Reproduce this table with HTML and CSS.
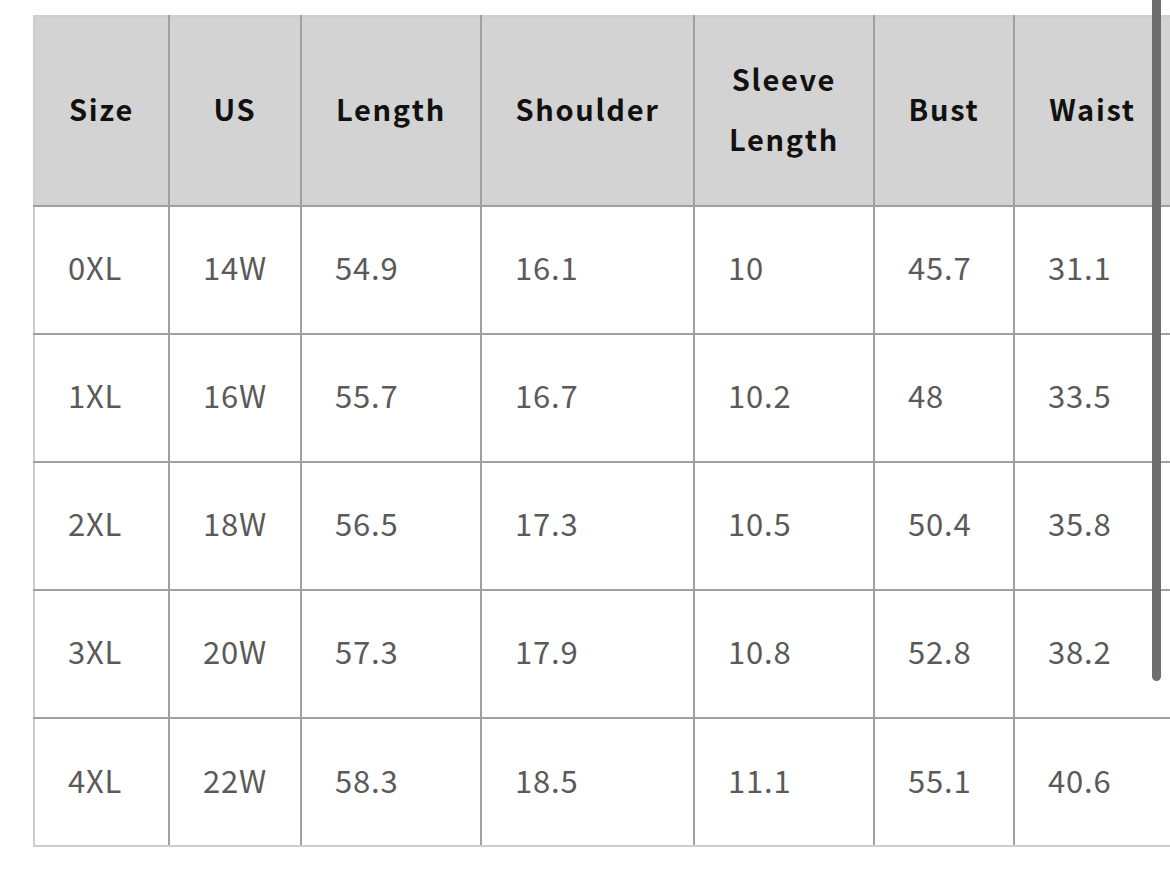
FILE: index.html
```html
<!DOCTYPE html>
<html>
<head>
<meta charset="utf-8">
<link rel="stylesheet" href="styles.css">
</head>
<body>
<div class="wrap">
  <table class="size-table">
    <colgroup>
      <col class="c1"><col class="c2"><col class="c3"><col class="c4"><col class="c5"><col class="c6"><col class="c7">
    </colgroup>
    <thead>
      <tr>
        <th>Size</th><th>US</th><th>Length</th><th>Shoulder</th><th>Sleeve<br>Length</th><th>Bust</th><th>Waist</th>
      </tr>
    </thead>
    <tbody>
      <tr><td>0XL</td><td>14W</td><td>54.9</td><td>16.1</td><td>10</td><td>45.7</td><td>31.1</td></tr>
      <tr><td>1XL</td><td>16W</td><td>55.7</td><td>16.7</td><td>10.2</td><td>48</td><td>33.5</td></tr>
      <tr><td>2XL</td><td>18W</td><td>56.5</td><td>17.3</td><td>10.5</td><td>50.4</td><td>35.8</td></tr>
      <tr><td>3XL</td><td>20W</td><td>57.3</td><td>17.9</td><td>10.8</td><td>52.8</td><td>38.2</td></tr>
      <tr><td>4XL</td><td>22W</td><td>58.3</td><td>18.5</td><td>11.1</td><td>55.1</td><td>40.6</td></tr>
    </tbody>
  </table>
</div>
<div class="scrollbar"></div>
</body>
</html>
```
FILE: styles.css
```css
html, body {
  margin: 0;
  padding: 0;
  background: #ffffff;
}
body {
  width: 1170px;
  height: 877px;
  overflow: hidden;
  position: relative;
  font-family: "Noto Sans CJK SC", "Noto Sans", sans-serif;
}
.wrap {
  padding: 15px 0 0 33px;
}
.size-table {
  border-collapse: collapse;
  table-layout: fixed;
  width: 1137px;
  border: 2px solid #cdcdcd;
}
.c1 { width: 135px; }
.c2 { width: 132px; }
.c3 { width: 180px; }
.c4 { width: 213px; }
.c5 { width: 180px; }
.c6 { width: 140px; }
.c7 { width: 157px; }
.size-table th,
.size-table td {
  border: 2px solid #a0a0a0;
  vertical-align: middle;
  white-space: nowrap;
}
.size-table thead tr {
  height: 190px;
}
.size-table th {
  background: #d3d3d3;
  color: #111111;
  font-weight: 700;
  font-size: 29px;
  letter-spacing: 1.7px;
  line-height: 60px;
  text-align: center;
  padding: 0 0 6px 0;
}
.size-table tbody tr {
  height: 128px;
}
.size-table td {
  color: #5a5a5a;
  font-weight: 400;
  font-size: 31px;
  letter-spacing: 0.8px;
  text-align: left;
  padding: 0 0 7px 33px;
}
.size-table tbody tr:last-child td {
  padding-bottom: 5px;
}
.size-table tr > :first-child { border-left-color: #cdcdcd; }
.size-table tr > :last-child { border-right-color: #cdcdcd; }
.size-table thead th { border-top-color: #cdcdcd; }
.size-table tbody tr:last-child td { border-bottom-color: #cdcdcd; }
.scrollbar {
  position: absolute;
  left: 1152px;
  top: 0;
  width: 9px;
  height: 681px;
  background: #6e6e6e;
  border-radius: 0 0 5px 5px;
}
```
